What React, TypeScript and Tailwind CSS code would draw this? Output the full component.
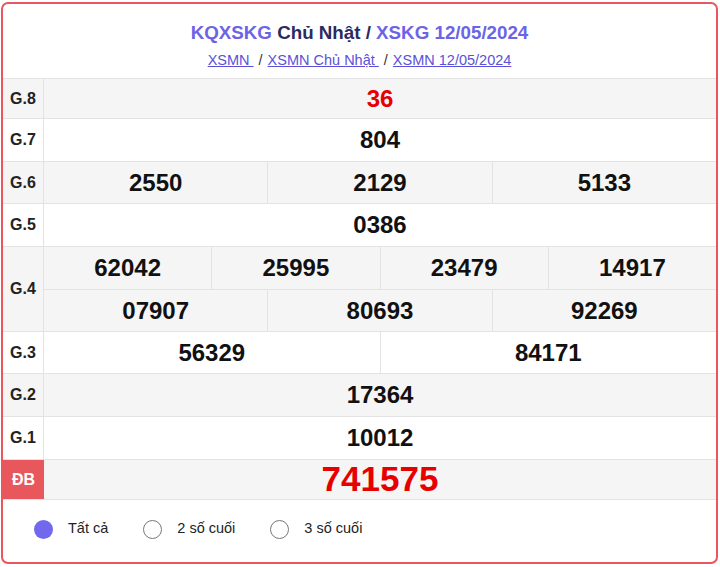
import { useState } from "react";

const rows: { label: string; cells: string[][]; h: string; bg: string; red?: boolean }[] = [
    { label: "G.8", cells: [["36"]], h: "h-[39px]", bg: "bg-[#f5f5f5]", red: true },
    { label: "G.7", cells: [["804"]], h: "h-[42px]", bg: "bg-white" },
    { label: "G.6", cells: [["2550", "2129", "5133"]], h: "h-[41px]", bg: "bg-[#f5f5f5]" },
    { label: "G.5", cells: [["0386"]], h: "h-[42px]", bg: "bg-white" },
    { label: "G.4", cells: [["62042", "25995", "23479", "14917"], ["07907", "80693", "92269"]], h: "h-[42px]", bg: "bg-[#f5f5f5]" },
    { label: "G.3", cells: [["56329", "84171"]], h: "h-[41px]", bg: "bg-white" },
    { label: "G.2", cells: [["17364"]], h: "h-[42px]", bg: "bg-[#f5f5f5]" },
    { label: "G.1", cells: [["10012"]], h: "h-[42px]", bg: "bg-white" },
];

export default function App() {

    const [mode, setMode] = useState(0);

    return <div className="w-[720px] h-[567px] bg-white pt-[2px] pl-[1px] font-['Liberation_Sans'] text-[#222]">
        <div className="w-[717px] h-[562px] border-2 border-[#e9565b] rounded-[7px] overflow-hidden flex flex-col">

            <div className="h-[75px] shrink-0 flex flex-col items-center border-b border-[#e3e3e3]">
                <h1 className="mt-[18px] text-[18.75px] font-bold leading-[22px]">
                    <a className="text-[#6c63e6]">KQXSKG</a>
                    <span className="text-[#2c2a5f]"> Chủ Nhật / </span>
                    <a className="text-[#6c63e6]">XSKG 12/05/2024</a>
                </h1>
                <div className="mt-[8px] text-[14.5px] leading-[17px] text-[#333] flex">
                    <a className="underline text-[#5b51d8] whitespace-pre">XSMN </a>
                    <span className="mx-[5px]">/</span>
                    <a className="underline text-[#5b51d8] whitespace-pre">XSMN Chủ Nhật </a>
                    <span className="mx-[5px]">/</span>
                    <a className="underline text-[#5b51d8]">XSMN 12/05/2024</a>
                </div>
            </div>

            {
                rows.map(r => <div key={r.label} className={`flex shrink-0 border-b border-[#e3e3e3] ${r.bg}`}>
                    <div className="w-[41px] shrink-0 flex items-center pl-[7px] text-[16px] font-bold border-r border-[#e3e3e3]">{r.label}</div>
                    <div className="flex-1 flex flex-col">
                        {
                            r.cells.map((line, i) => <div key={i} className={`flex ${r.h} ${i > 0 ? "border-t border-[#e3e3e3]" : ""}`}>
                                {
                                    line.map((n, j) => <div key={j}
                                        className={`flex-1 flex items-center justify-center text-[24px] font-bold ${j > 0 ? "border-l border-[#e3e3e3]" : ""} ${r.red ? "text-[#e60000]" : "text-[#111]"}`}>
                                        {n}
                                    </div>)
                                }
                            </div>)
                        }
                    </div>
                </div>)
            }

            <div className="flex shrink-0 h-[40px] border-b border-[#e3e3e3] bg-[#f5f5f5]">
                <div className="w-[41px] shrink-0 flex items-center justify-center text-[16px] font-bold text-white bg-[#e8575c]">ĐB</div>
                <div className="flex-1 flex items-center justify-center text-[35px] font-bold text-[#e60000]">741575</div>
            </div>

            <div className="flex-1 flex items-center pl-[31px] pb-[4px] text-[14.5px] text-[#222]">
                {
                    ["Tất cả", "2 số cuối", "3 số cuối"].map((t, i) => <label key={t} className="flex items-center mr-[35px]" onClick={() => setMode(i)}>
                        {
                            mode === i
                                ? <span className="w-[19px] h-[19px] rounded-full bg-[#7168ee]" />
                                : <span className="w-[19px] h-[19px] rounded-full border border-[#777] bg-white" />
                        }
                        <span className="ml-[15px]">{t}</span>
                    </label>)
                }
            </div>

        </div>
    </div>;

}
